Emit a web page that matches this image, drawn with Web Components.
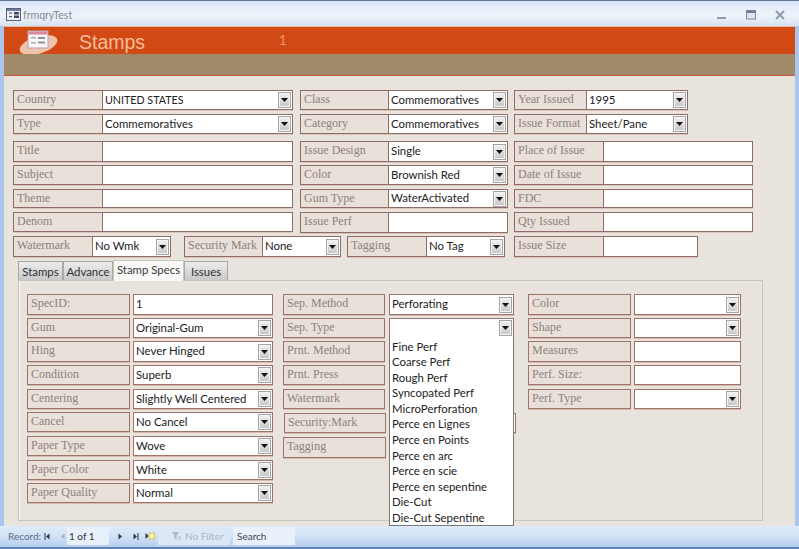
<!DOCTYPE html>
<html><head><meta charset="utf-8"><title>frmqryTest</title>
<style>html,body{margin:0;padding:0;background:#e8e3dc;overflow:hidden}</style></head>
<body>
<x-app>
  <x-titlebar slot="title">frmqryTest</x-titlebar>
  <x-formhead slot="head" caption="Stamps" count="1"></x-formhead>

  <x-cols style="--pl:9px;--pt:14px;--col-gap:7px">
    <x-col style="--w:280px">
      <x-field label="Country" combo style="--lw:90px;--fw:190px"><span style="font-size:10.7px">UNITED STATES</span></x-field>
      <x-field label="Type" combo style="--lw:90px;--fw:190px">Commemoratives</x-field>
      <x-field label="Title" style="--lw:90px;--fw:190px;--h:21px"></x-field>
      <x-field label="Subject" style="--lw:90px;--fw:190px"></x-field>
      <x-field label="Theme" style="--lw:90px;--fw:190px;--h:19px"></x-field>
      <x-field label="Denom" style="--lw:90px;--fw:190px"></x-field>
    </x-col>
    <x-col style="--w:208px">
      <x-field label="Class" combo style="--lw:89px;--fw:119px">Commemoratives</x-field>
      <x-field label="Category" combo style="--lw:89px;--fw:119px">Commemoratives</x-field>
      <x-field label="Issue Design" combo style="--lw:89px;--fw:119px;--h:21px">Single</x-field>
      <x-field label="Color" combo style="--lw:89px;--fw:119px">Brownish Red</x-field>
      <x-field label="Gum Type" combo style="--lw:89px;--fw:119px;--h:19px">WaterActivated</x-field>
      <x-field label="Issue Perf" style="--lw:89px;--fw:119px;--h:21px"></x-field>
    </x-col>
    <x-col style="--w:239px;margin-left:-1px">
      <x-field label="Year Issued" combo style="--lw:73px;--fw:101px">1995</x-field>
      <x-field label="Issue Format" combo style="--lw:73px;--fw:101px">Sheet/Pane</x-field>
      <x-field label="Place of Issue" style="--lw:90px;--fw:149px;--h:21px"></x-field>
      <x-field label="Date of Issue" style="--lw:90px;--fw:149px"></x-field>
      <x-field label="FDC" style="--lw:90px;--fw:149px;--h:19px"></x-field>
      <x-field label="Qty Issued" style="--lw:90px;--fw:149px"></x-field>
    </x-col>
  </x-cols>

  <x-strip>
    <x-field label="Watermark" combo style="--lw:80px;--fw:78px;--h:21px">No Wmk</x-field>
    <x-field label="Security Mark" combo style="--lw:79px;--fw:78px;--h:21px;margin-left:13px">None</x-field>
    <x-field label="Tagging" combo style="--lw:80px;--fw:78px;--h:21px;margin-left:6px">No Tag</x-field>
    <x-field label="Issue Size" style="--lw:90px;--fw:94px;--h:21px;margin-left:9px"></x-field>
  </x-strip>

  <x-tabs>
    <x-tab>Stamps</x-tab><x-tab style="--tw:50px">Advance</x-tab><x-tab active style="--tw:71px">Stamp Specs</x-tab><x-tab style="--tw:44px">Issues</x-tab>
  </x-tabs>

  <x-panel>
    <x-col style="--w:246px;--rows:24px 23px 24px 24px 23px 24px 24px 23px 24px">
      <x-field panel label="SpecID:" style="--lw:103px;--gap:3px;--fw:140px;--h:21px">1</x-field>
      <x-field panel label="Gum" combo style="--lw:103px;--gap:3px;--fw:140px">Original-Gum</x-field>
      <x-field panel label="Hing" combo style="--lw:103px;--gap:3px;--fw:140px;--h:21px">Never Hinged</x-field>
      <x-field panel label="Condition" combo style="--lw:103px;--gap:3px;--fw:140px">Superb</x-field>
      <x-field panel label="Centering" combo style="--lw:103px;--gap:3px;--fw:140px">Slightly Well Centered</x-field>
      <x-field panel label="Cancel" combo style="--lw:103px;--gap:3px;--fw:140px">No Cancel</x-field>
      <x-field panel label="Paper Type" combo style="--lw:103px;--gap:3px;--fw:140px">Wove</x-field>
      <x-field panel label="Paper Color" combo style="--lw:103px;--gap:3px;--fw:140px">White</x-field>
      <x-field panel label="Paper Quality" combo style="--lw:103px;--gap:3px;--fw:140px">Normal</x-field>
    </x-col>
    <x-col style="--w:231px;--rows:24px 23px 24px 24px 23px 24px 24px 23px 24px;margin-left:10px">
      <x-field panel label="Sep. Method" combo style="--lw:102px;--gap:4px;--fw:125px;--h:21px">Perforating</x-field>
      <x-field panel label="Sep. Type" combo style="--lw:102px;--gap:4px;--fw:125px">
        <x-menu slot="menu">
          <x-item>Fine Perf</x-item><x-item>Coarse Perf</x-item><x-item>Rough Perf</x-item><x-item>Syncopated Perf</x-item><x-item>MicroPerforation</x-item><x-item>Perce en Lignes</x-item><x-item>Perce en Points</x-item><x-item>Perce en arc</x-item><x-item>Perce en scie</x-item><x-item>Perce en sepentine</x-item><x-item>Die-Cut</x-item><x-item>Die-Cut Sepentine</x-item>
        </x-menu>
      </x-field>
      <x-field panel label="Prnt. Method" style="--lw:102px;--gap:4px;--fw:125px;--h:21px"></x-field>
      <x-field panel label="Prnt. Press" style="--lw:102px;--gap:4px;--fw:125px"></x-field>
      <x-field panel label="Watermark" style="--lw:102px;--gap:4px;--fw:125px"></x-field>
      <x-field panel label="Security:Mark" style="--lw:102px;--gap:3px;--fw:127px;margin:1px 0 0 1px"></x-field>
      <x-field panel label="Tagging" style="--lw:103px;--fw:0px;--h:21px;margin-top:1px"></x-field>
    </x-col>
    <x-col style="--w:213px;--rows:24px 23px 24px 24px 23px;margin-left:14px">
      <x-field panel label="Color" combo style="--lw:103px;--gap:3px;--fw:107px;--h:21px"></x-field>
      <x-field panel label="Shape" combo style="--lw:103px;--gap:3px;--fw:107px"></x-field>
      <x-field panel label="Measures" style="--lw:103px;--gap:3px;--fw:107px;--h:21px"></x-field>
      <x-field panel label="Perf. Size:" style="--lw:103px;--gap:3px;--fw:107px"></x-field>
      <x-field panel label="Perf. Type" combo style="--lw:103px;--gap:3px;--fw:107px"></x-field>
    </x-col>
  </x-panel>

  <x-status slot="status"></x-status>
</x-app>

<script>
function def(name, html, init){
  customElements.define(name, class extends HTMLElement{
    constructor(){super();const r=this.attachShadow({mode:'open'});r.innerHTML=typeof html==='function'?html(this):html;}
    connectedCallback(){ if(init) init(this); }
  });
}
const UI='Lato,"Liberation Sans",sans-serif';
const SERIF='"Liberation Serif",serif';

def('x-app',`<style>
:host{display:flex;flex-direction:column;width:799px;height:549px;box-sizing:border-box;overflow:hidden;background:#e8e3dc;font-family:${UI}}
.mid{flex:1;display:flex;flex-direction:column;min-height:0;background:#e8e3dc;border-left:4px solid #a8c6ee;border-right:4px solid #a8c6ee;position:relative}
.body{flex:1;display:flex;flex-direction:column;min-height:0}
</style>
<slot name="title"></slot>
<div class="mid"><slot name="head"></slot><div class="body"><slot></slot></div></div>
<slot name="status"></slot>`);

def('x-titlebar',`<style>
:host{display:flex;align-items:center;height:26px;box-sizing:border-box;border-top:1px solid #66789a;background:linear-gradient(#d5e3f5 0,#e6eef9 25%,#eef3fa 60%,#d5e2f2 100%);padding:2px 14px 0 6px;color:#838a93;font:10.5px ${UI}}
svg{display:block}.t{margin-left:2px;flex:1}
.c{display:flex;align-items:center}
.c svg{margin-left:19px}
.c svg:first-child{margin-right:1px}
</style>
<svg width="15" height="13" viewBox="0 0 15 13"><rect x=".5" y=".5" width="14" height="12" fill="#eef1f6" stroke="#56607a"/><rect x="1" y="1" width="13" height="2" fill="#6f7d9c"/><rect x="3" y="4.5" width="3" height="1.2" fill="#56607a"/><rect x="3" y="8" width="3" height="1.2" fill="#56607a"/><rect x="8" y="4" width="5" height="2.5" fill="#3f4a66"/><rect x="8" y="7.5" width="5" height="2.5" fill="#3f4a66"/></svg>
<span class="t"><slot></slot></span>
<div class="c">
<svg width="9" height="10" viewBox="0 0 9 10"><rect y="7" width="9" height="2" fill="#8f9aab"/></svg>
<svg width="10" height="10" viewBox="0 0 10 10"><rect x=".5" y=".5" width="9" height="8.5" fill="#dfe6f0" stroke="#79889f"/><rect x="1" y="1" width="8" height="2" fill="#6e7d96"/></svg>
<svg width="10" height="10" viewBox="0 0 10 10"><path d="M1 1 9 9M9 1 1 9" stroke="#8e9cb0" stroke-width="2"/></svg>
</div>`);

def('x-formhead',e=>`<style>
:host{display:block;border-top:1px solid #eab79b}
.red{height:27px;background:#d14915;display:flex;align-items:center;position:relative;overflow:hidden}
.brown{height:21px;background:#a08a67;border-bottom:1px solid #c9593a}
svg{display:block;margin:4px 0 0 15px;flex:none}
.cap{font:19.5px "Liberation Sans",sans-serif;color:#f6bd98;margin-left:16px;width:200px;padding-top:4px}
.n{font:13px ${UI};color:#ee9a68;padding-bottom:1px}
</style>
<div class="red">
<svg width="44" height="30" viewBox="0 0 44 30"><ellipse cx="19.5" cy="17" rx="19.5" ry="8.5" transform="rotate(-17 19.5 17)" fill="#eec4ab"/><rect x="9" y="3" width="20" height="17" fill="#fbf6f4" stroke="#b9a1b4"/><rect x="9.5" y="3.5" width="19" height="3" fill="#d88a9a"/><rect x="12" y="9" width="5" height="1.5" fill="#b0a8b8"/><rect x="19" y="9" width="7" height="2" fill="#8d94a6"/><rect x="12" y="14" width="5" height="1.5" fill="#b0a8b8"/><rect x="19" y="13.5" width="7" height="2" fill="#8d94a6"/></svg>
<span class="cap">${e.getAttribute('caption')}</span><span class="n">${e.getAttribute('count')}</span>
</div>
<div class="brown"></div>`);

def('x-cols',`<style>:host{display:flex;padding:var(--pt) 0 0 var(--pl);gap:var(--col-gap)}</style><slot></slot>`);
def('x-strip',`<style>:host{display:flex;padding:0 0 0 9px;height:25px}</style><slot></slot>`);
def('x-col',`<style>:host{display:grid;width:var(--w);flex:none;grid-template-rows:var(--rows,24px 27px 24px 24px 23px 24px);align-content:start}</style><slot></slot>`);

def('x-field',e=>{
  const combo=e.hasAttribute('combo'), panel=e.hasAttribute('panel');
  const bd=panel?'#9c7469':'#8f6d66';
  const sh=panel?'0 1px 0 #d8b9ae':'0 1px 0 #dcc5bb';
  const hide=e.style.getPropertyValue('--fw').trim()==='0px';
  return `<style>
:host{display:flex;align-items:flex-start;height:var(--h,20px);position:relative}
.l{width:var(--lw);height:100%;box-sizing:border-box;flex:none;border:1px solid ${bd};box-shadow:${sh};background:#e8e0d9;color:#8c827b;font:12px/1 ${SERIF};padding:2px 0 0 3px;white-space:nowrap;overflow:hidden}
.f{width:var(--fw);margin-left:var(--gap,0);height:100%;box-sizing:border-box;flex:none;background:#fff;display:${hide?'none':'flex'};align-items:center;border:1px solid ${bd};box-shadow:${sh};${panel?'':'border-left:0;'}color:#222;font:11.4px ${UI};padding:0 0 2px 2px;position:relative;white-space:nowrap}
.v{flex:1;overflow:hidden}
.b{flex:none;width:13px;height:16px;margin:2px 1px 0 0;box-sizing:border-box;border:1px solid #a4a4a4;box-shadow:inset 0 0 0 1px #f4f4f4;background:linear-gradient(#f2f2f2,#c6c6c6);display:flex;align-items:center;justify-content:center}
.m{position:absolute;left:-1px;top:100%;z-index:20}
</style>
<div class="l">${e.getAttribute('label')}</div>
<div class="f"><span class="v"><slot></slot></span>${combo?'<span class="b"><svg width="7" height="4" viewBox="0 0 7 4"><path d="M0 0H7L3.5 4Z" fill="#111"/></svg></span>':''}
<div class="m"><slot name="menu"></slot></div></div>`;
});

def('x-menu',`<style>:host{display:block;width:125px;height:189px;box-sizing:border-box;background:#fff;border:1px solid #777;border-top:0;padding-top:1.5px}</style><slot></slot>`);
def('x-item',`<style>:host{display:block;height:15.6px;padding-left:2px;font:11.4px/15.6px ${UI};color:#222;white-space:nowrap}</style><slot></slot>`);

def('x-tabs',`<style>:host{display:flex;align-items:flex-end;height:19px;padding-left:14px;position:relative;z-index:2}</style><slot></slot>`);
def('x-tab',e=>{
  const a=e.hasAttribute('active');
  return `<style>
:host{display:flex;align-items:center;justify-content:center;box-sizing:border-box;width:var(--tw,45px);height:${a?'21px':'19px'};${a?'margin-bottom:-1px;padding-bottom:3px;':''}font:11.4px ${UI};color:${a?'#3a3a3a':'#2f3030'};background:${a?'#f8f8f6':'linear-gradient(#ececec,#c9c9c9)'};border:1px solid #a9a9a6;${a?'border-color:#c9c6bf;border-bottom:0;':'border-bottom:0;'}}
</style><slot></slot>`;
});

def('x-panel',`<style>:host{display:flex;box-sizing:border-box;width:745px;height:241px;margin-left:14px;padding:13px 0 0 8px;border:1px solid #c9c4ba;box-shadow:inset 1px 0 0 #f8f6f2;background:#e8e3dc}</style><slot></slot>`);

def('x-status',`<style>
:host{display:flex;align-items:stretch;height:23px;box-sizing:border-box;padding:1px 0 2px 4px;border-bottom:2px solid #5f83b5;background:linear-gradient(#deebfa,#cfe0f6 55%,#b4cdee);font:10px ${UI};color:#5b7089;position:relative;z-index:1}
.rec{display:flex;align-items:center;width:63px;padding-left:4px;box-sizing:border-box}
.rec span{width:36px;flex:none}
.box{width:42px;background:#e7f0fb;color:#333;display:flex;align-items:center;padding-left:2px;box-sizing:border-box}
.nx{display:flex;align-items:center;width:49px;padding-left:9px;box-sizing:border-box;gap:6px}
.nf{display:flex;align-items:center;padding-left:13px;gap:3px;width:72px;background:#dbe7f6;color:#a9b7c8;margin-right:3px;box-sizing:border-box}
.s{width:62px;background:#e7f0fb;color:#444;display:flex;align-items:center;padding-left:4px;box-sizing:border-box}
svg{display:block;flex:none}
</style>
<div class="rec"><span>Record:</span><svg width="6" height="7" viewBox="0 0 6 7"><path d="M1 0V7" stroke="#23344e"/><path d="M5.5 0.5V6.5L2 3.5Z" fill="#23344e"/></svg><svg width="4" height="7" viewBox="0 0 4 7" style="margin-left:11px"><path d="M3.5 .5V6.5L0 3.5Z" fill="#a5b3c5"/></svg></div>
<div class="box">1 of 1</div>
<div class="nx"><svg width="4" height="7" viewBox="0 0 4 7"><path d="M.5 .5V6.5L4 3.5Z" fill="#23344e"/></svg><svg width="6" height="7" viewBox="0 0 6 7" style="margin-left:5px"><path d="M5 0V7" stroke="#23344e"/><path d="M.5 .5V6.5L4 3.5Z" fill="#23344e"/></svg><svg width="10" height="8" viewBox="0 0 10 8"><path d="M.5 1V7L3.5 4Z" fill="#23344e"/><rect x="4" y="1" width="5.5" height="6" fill="#fbeea0" stroke="#d9b64a" stroke-width=".8"/></svg></div>
<div class="nf"><svg width="11" height="10" viewBox="0 0 11 10"><path d="M1 1H8L5.5 4.5V9L3.5 7.5V4.5Z" fill="#a9b7c8"/><path d="M7 5 10 9M10 5 7 9" stroke="#b7c2d0"/></svg><span>No Filter</span></div>
<div class="s">Search</div>`);
</script>
</body></html>
